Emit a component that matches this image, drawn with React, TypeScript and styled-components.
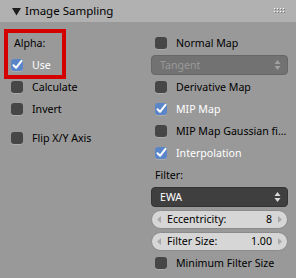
import React from "react";
import styled, { createGlobalStyle } from "styled-components";

const Global = createGlobalStyle`
  html, body { margin: 0; padding: 0; background: #999999; }
  body { font-family: "Noto Sans", "DejaVu Sans", sans-serif; }
`;

const Panel = styled.div`
  width: 296px;
  height: 278px;
  background: #999999;
  position: relative;
  overflow: hidden;
`;

const Header = styled.div`
  height: 22px;
  background: #b1b1b1;
  display: flex;
  align-items: center;
  padding-left: 12px;
  padding-right: 11px;
  box-sizing: border-box;
  font-size: 11.5px;
  color: #000;
`;

const HeaderTitle = styled.span`
  margin-left: 4px;
  flex: 1;
  line-height: 22px;
`;

const Body = styled.div`
  display: grid;
  grid-template-columns: 137px 137px;
  column-gap: 7px;
  padding: 10px 8px 0 7px;
  font-size: 10.6px;
`;

const Column = styled.div`
  display: flex;
  flex-direction: column;
`;

const Row = styled.div<{ $indent?: number }>`
  height: 22px;
  display: flex;
  align-items: center;
  padding-left: ${(p) => p.$indent ?? 0}px;
`;

const Spacer = styled.div<{ $h: number }>`
  height: ${(p) => p.$h}px;
`;

const Label = styled.span<{ $indent?: number }>`
  color: #000;
  padding-left: ${(p) => p.$indent ?? 0}px;
  white-space: nowrap;
`;

const Box = styled.span<{ $on?: boolean }>`
  width: 12px;
  height: 12px;
  border-radius: 3px;
  box-sizing: border-box;
  background: ${(p) => (p.$on ? "#5a85c8" : "#464646")};
  box-shadow: 0 1px 0 rgba(255, 255, 255, 0.18);
  display: flex;
  align-items: center;
  justify-content: center;
  flex: none;
`;

const CheckText = styled.span<{ $on?: boolean }>`
  margin-left: 9px;
  color: ${(p) => (p.$on ? "#ffffff" : "#000000")};
  white-space: nowrap;
`;

const Select = styled.div<{ $dark?: boolean }>`
  height: 20px;
  width: 100%;
  box-sizing: border-box;
  border-radius: 4px;
  background: ${(p) => (p.$dark ? "#3f3f3f" : "#727272")};
  color: ${(p) => (p.$dark ? "#ffffff" : "#9a9a9a")};
  border: 1px solid ${(p) => (p.$dark ? "#333" : "#666")};
  display: flex;
  align-items: center;
  padding: 0 6px 0 8px;
`;

const SelectText = styled.span`
  flex: 1;
`;

const Slider = styled.div`
  height: 19px;
  width: 100%;
  box-sizing: border-box;
  border-radius: 10px;
  background: #d6d6d6;
  border: 1px solid #8c8c8c;
  display: flex;
  align-items: center;
  padding: 0 5px 0 5px;
  color: #000;
`;

const SliderName = styled.span`
  flex: 1;
  margin-left: 6px;
`;

const SliderValue = styled.span`
  margin-right: 6px;
`;

const Highlight = styled.div`
  position: absolute;
  left: 4px;
  top: 29px;
  width: 62px;
  height: 50px;
  box-sizing: border-box;
  border: 4px solid #d40000;
`;

const Check = () => (
  <svg width="12" height="12" viewBox="0 0 12 12">
    <path d="M2.5 6.2 L5 8.8 L10.5 1.8" fill="none" stroke="#fff" strokeWidth="2" strokeLinecap="round" strokeLinejoin="round" />
  </svg>
);

const CheckBox = ({ on, label }: { on?: boolean; label: string }) => (
  <>
    <Box $on={on}>{on && <Check />}</Box>
    <CheckText $on={on}>{label}</CheckText>
  </>
);

const UpDown = ({ color }: { color: string }) => (
  <svg width="7" height="12" viewBox="0 0 7 12">
    <path d="M0.5 5 L3.5 1 L6.5 5 Z" fill={color} />
    <path d="M0.5 7 L3.5 11 L6.5 7 Z" fill={color} />
  </svg>
);

const Arrow = ({ dir }: { dir: "l" | "r" }) => (
  <svg width="4" height="7" viewBox="0 0 4 7">
    <path d={dir === "l" ? "M4 0 L0 3.5 L4 7 Z" : "M0 0 L4 3.5 L0 7 Z"} fill="#a8a8a8" />
  </svg>
);

const Grip = () => (
  <svg width="11" height="6" viewBox="0 0 11 6">
    {[0, 3, 6, 9].map((x) =>
      [0, 3].map((y) => (
        <g key={`${x}-${y}`}>
          <rect x={x + 1} y={y + 1} width="1" height="1" fill="#777" />
          <rect x={x} y={y} width="1" height="1" fill="#fff" />
        </g>
      ))
    )}
  </svg>
);

export default function App() {
  return (
    <Panel>
      <Global />
      <Header>
        <svg width="9" height="9" viewBox="0 0 9 9">
          <path d="M0 1 L9 1 L4.5 8.5 Z" fill="#1e1e1e" />
        </svg>
        <HeaderTitle>Image Sampling</HeaderTitle>
        <Grip />
      </Header>
      <Body>
        <Column>
          <Row>
            <Label $indent={7}>Alpha:</Label>
          </Row>
          <Row $indent={4}>
            <CheckBox on label="Use" />
          </Row>
          <Row $indent={4}>
            <CheckBox label="Calculate" />
          </Row>
          <Row $indent={4}>
            <CheckBox label="Invert" />
          </Row>
          <Spacer $h={7} />
          <Row $indent={4}>
            <CheckBox label="Flip X/Y Axis" />
          </Row>
        </Column>
        <Column>
          <Row $indent={4}>
            <CheckBox label="Normal Map" />
          </Row>
          <Row>
            <Select>
              <SelectText>Tangent</SelectText>
              <UpDown color="#a0a0a0" />
            </Select>
          </Row>
          <Row $indent={4}>
            <CheckBox label="Derivative Map" />
          </Row>
          <Row $indent={4}>
            <CheckBox on label="MIP Map" />
          </Row>
          <Row $indent={4}>
            <CheckBox label="MIP Map Gaussian fi..." />
          </Row>
          <Row $indent={4}>
            <CheckBox on label="Interpolation" />
          </Row>
          <Row>
            <Label $indent={4}>Filter:</Label>
          </Row>
          <Row>
            <Select $dark>
              <SelectText>EWA</SelectText>
              <UpDown color="#dcdcdc" />
            </Select>
          </Row>
          <Row>
            <Slider>
              <Arrow dir="l" />
              <SliderName>Eccentricity:</SliderName>
              <SliderValue>8</SliderValue>
              <Arrow dir="r" />
            </Slider>
          </Row>
          <Row>
            <Slider>
              <Arrow dir="l" />
              <SliderName>Filter Size:</SliderName>
              <SliderValue>1.00</SliderValue>
              <Arrow dir="r" />
            </Slider>
          </Row>
          <Row $indent={4}>
            <CheckBox label="Minimum Filter Size" />
          </Row>
        </Column>
      </Body>
      <Highlight />
    </Panel>
  );
}
